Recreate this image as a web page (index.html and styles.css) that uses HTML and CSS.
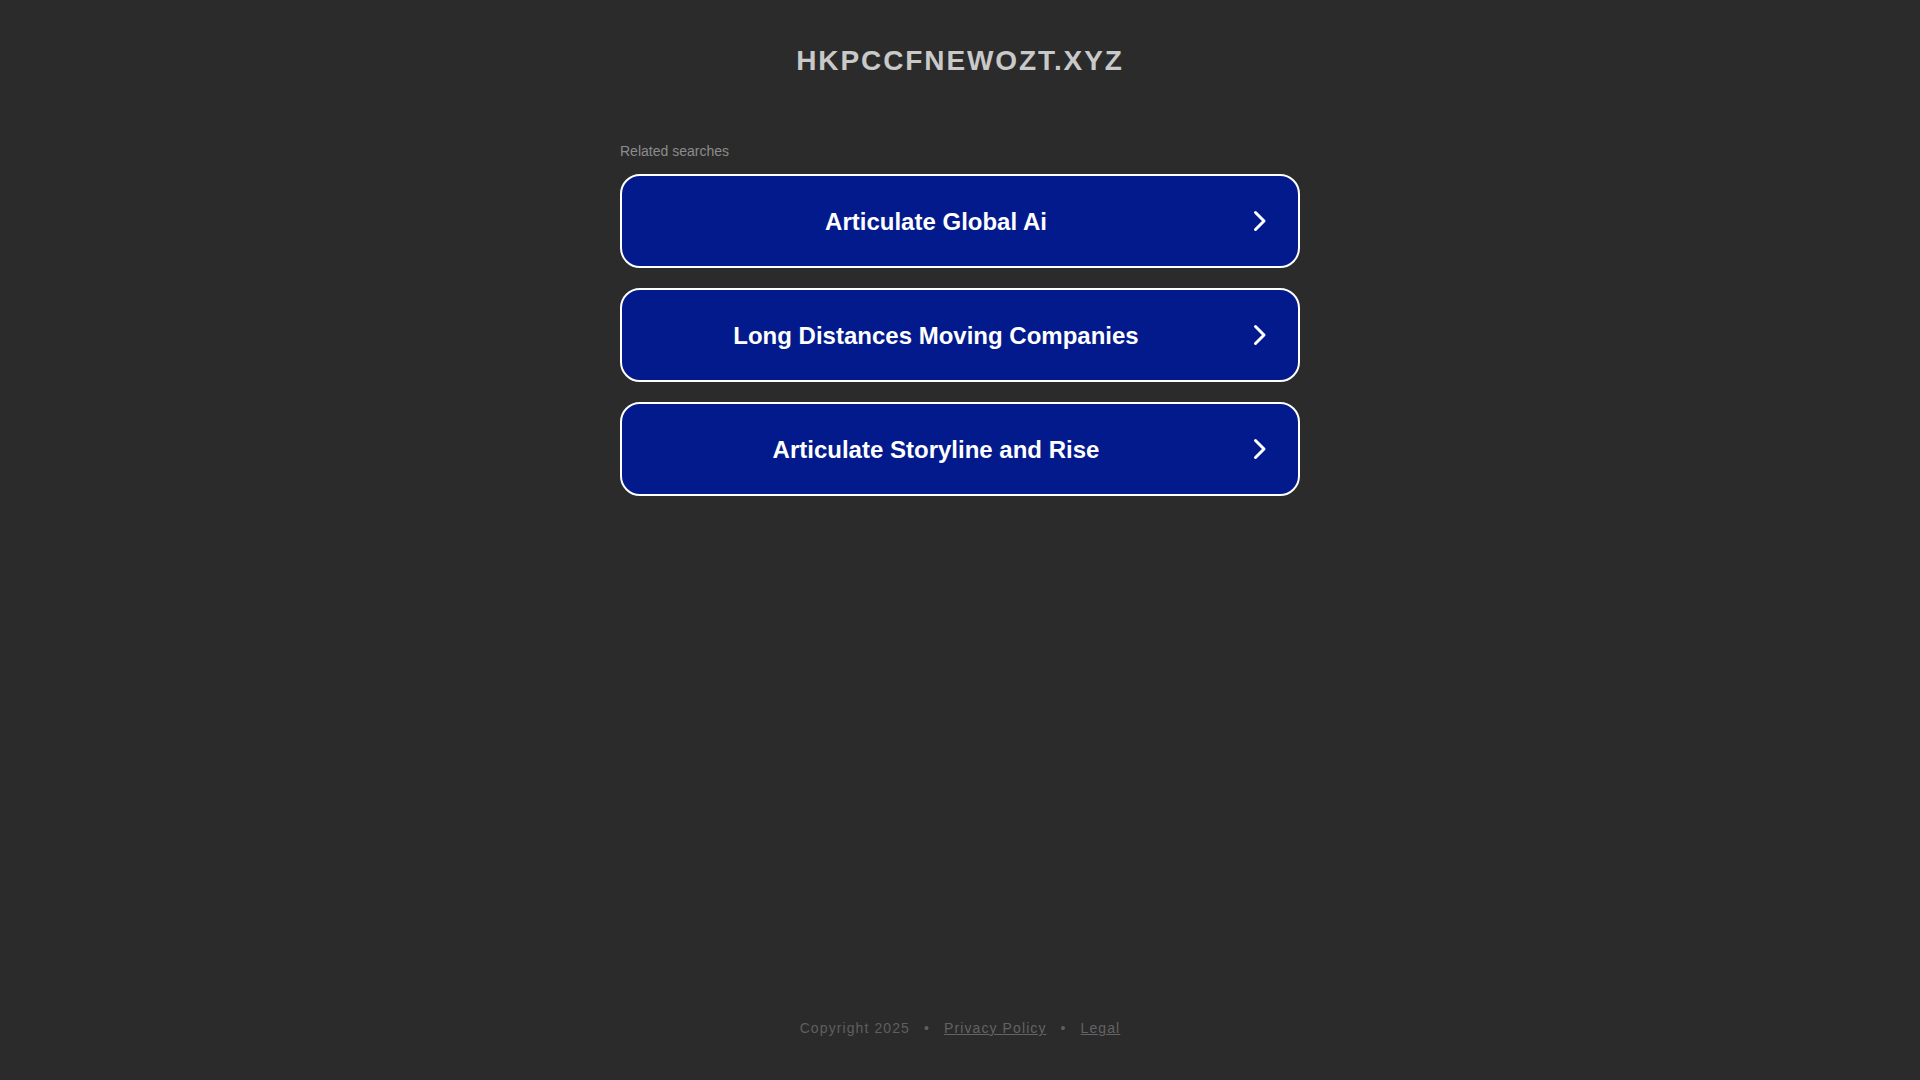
FILE: index.html
```html
<!DOCTYPE html>
<html lang="en">
<head>
<meta charset="utf-8">
<title>hkpccfnewozt.xyz</title>
<link rel="stylesheet" href="styles.css">
</head>
<body>
<div class="page">
  <header class="header">
    <h1 class="domain">HKPCCFNEWOZT.XYZ</h1>
  </header>
  <main class="content">
    <div class="related">Related searches</div>
    <ul class="links">
      <li><a class="link" href="#"><span class="link-text">Articulate Global Ai</span><svg class="chev" width="24" height="24" viewBox="0 0 24 24"><path d="M7.5 3.5 L16 12 L7.5 20.5" fill="none" stroke="#fff" stroke-width="3" stroke-linecap="round" stroke-linejoin="round"/></svg></a></li>
      <li><a class="link" href="#"><span class="link-text">Long Distances Moving Companies</span><svg class="chev" width="24" height="24" viewBox="0 0 24 24"><path d="M7.5 3.5 L16 12 L7.5 20.5" fill="none" stroke="#fff" stroke-width="3" stroke-linecap="round" stroke-linejoin="round"/></svg></a></li>
      <li><a class="link" href="#"><span class="link-text">Articulate Storyline and Rise</span><svg class="chev" width="24" height="24" viewBox="0 0 24 24"><path d="M7.5 3.5 L16 12 L7.5 20.5" fill="none" stroke="#fff" stroke-width="3" stroke-linecap="round" stroke-linejoin="round"/></svg></a></li>
    </ul>
  </main>
  <footer class="footer">
    <span>Copyright 2025</span><span class="sep">•</span><a href="#">Privacy Policy</a><span class="sep">•</span><a href="#">Legal</a>
  </footer>
</div>
</body>
</html>
```

FILE: styles.css
```css
html, body {
  margin: 0;
  padding: 0;
  background: #2b2b2b;
  font-family: "Liberation Sans", Arial, sans-serif;
}

.page {
  min-height: 100vh;
  display: flex;
  flex-direction: column;
  box-sizing: border-box;
}

.header {
  padding-top: 44px;
  text-align: center;
}

.domain {
  margin: 0;
  font-size: 28px;
  line-height: 34px;
  font-weight: bold;
  letter-spacing: 1.9px;
  color: #c9c9c9;
}

.content {
  width: 680px;
  margin: 65px auto 0;
}

.related {
  font-size: 14px;
  line-height: 16px;
  color: #8c8c8c;
  margin-bottom: 15px;
}

.links {
  list-style: none;
  margin: 0;
  padding: 0;
  display: flex;
  flex-direction: column;
  gap: 20px;
}

.link {
  box-sizing: border-box;
  height: 94px;
  display: flex;
  align-items: center;
  padding: 0 26px 0 2px;
  background: #021a8b;
  border: 2px solid #ffffff;
  border-radius: 20px;
  text-decoration: none;
  color: #ffffff;
}

.link-text {
  flex: 1;
  text-align: center;
  font-size: 24px;
  line-height: 28px;
  padding-top: 2px;
  font-weight: bold;
}

.chev {
  flex: none;
  display: block;
}

.footer {
  margin-top: auto;
  padding-bottom: 42px;
  text-align: center;
  font-size: 14px;
  line-height: 20px;
  letter-spacing: 1.1px;
  color: #5f5f5f;
}

.footer a {
  color: #636363;
  text-decoration: underline;
}

.sep {
  margin: 0 14px;
}
```
